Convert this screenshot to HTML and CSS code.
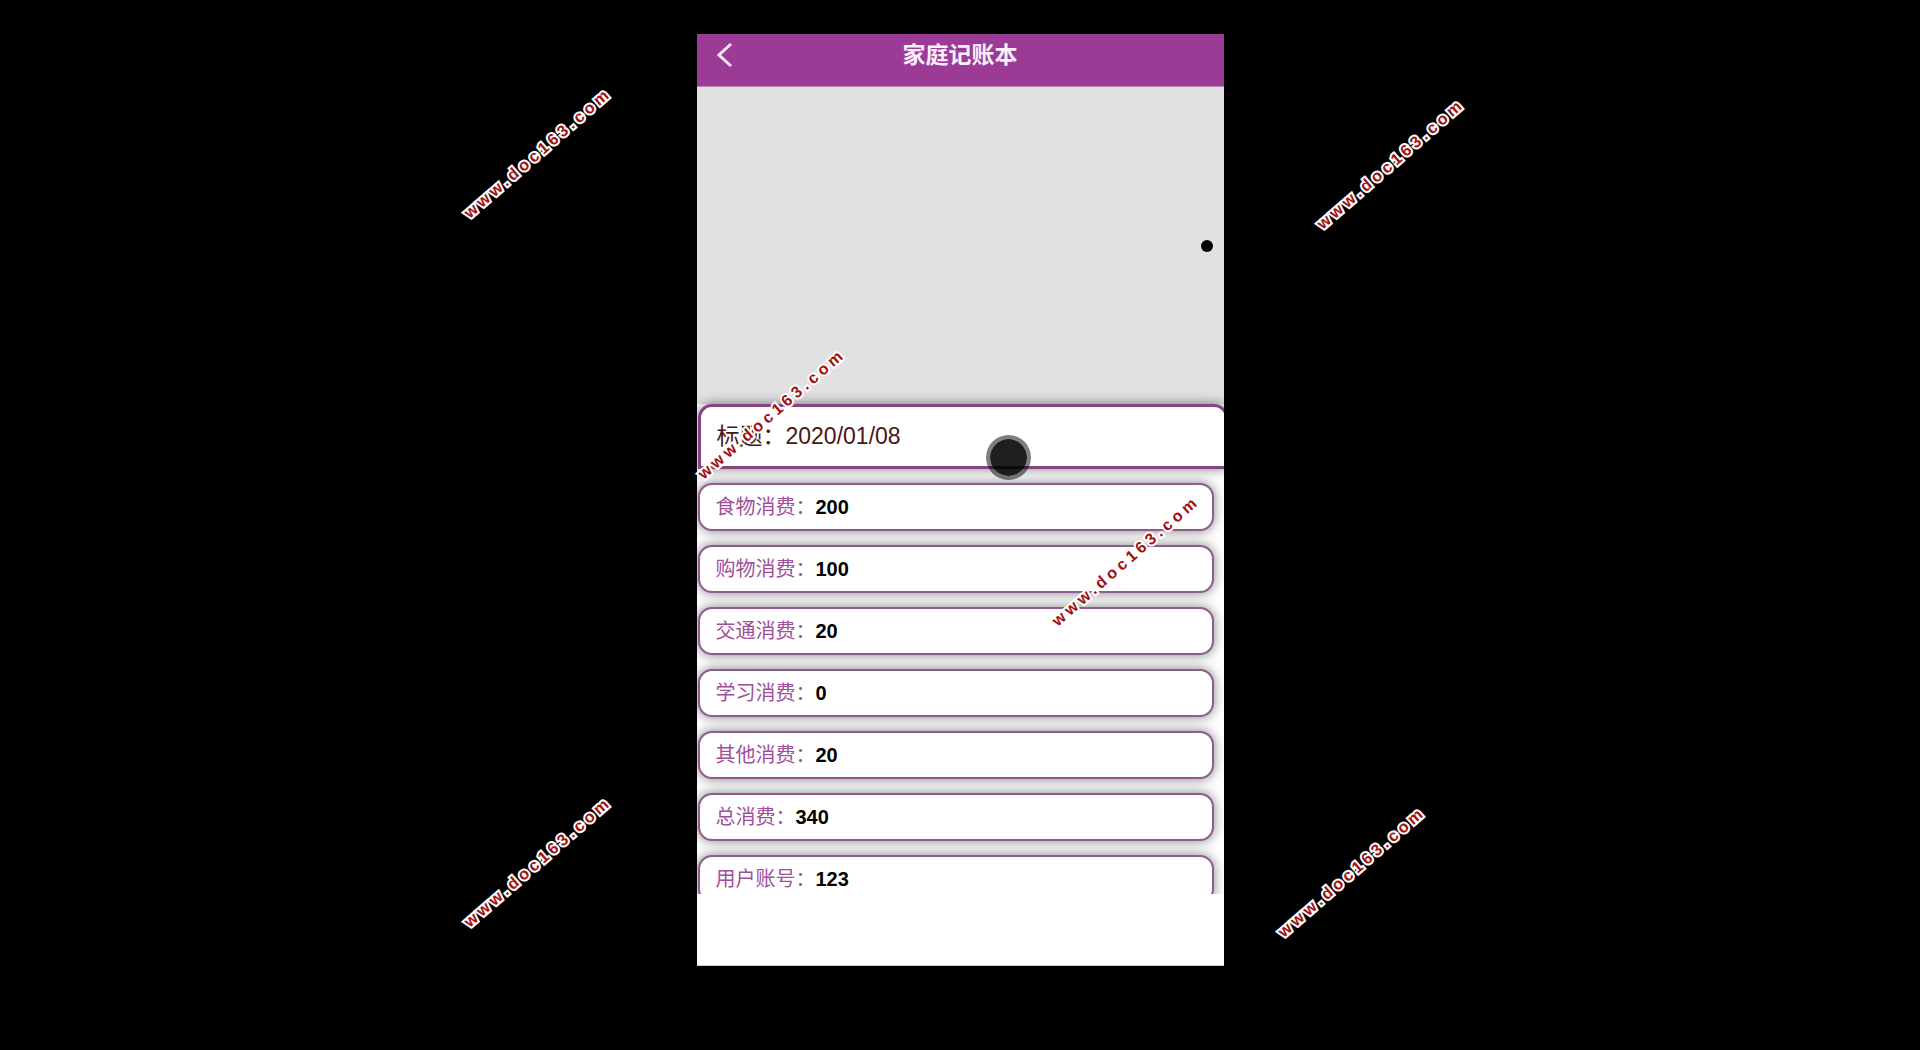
FILE: index.html
```html
<!DOCTYPE html>
<html lang="zh-CN">
<head>
<meta charset="utf-8">
<meta name="viewport" content="width=device-width, initial-scale=1">
<title>家庭记账本</title>
<link rel="stylesheet" href="styles.css">
</head>
<body>
<div class="stage">
  <main class="phone">
    <header class="bar">
      <button class="back" type="button" aria-label="返回">
        <svg width="16" height="26" viewBox="0 0 16 26" fill="none" stroke="#f6e4f8" stroke-width="3"><path d="M14 2 2 13 14 24"/></svg>
      </button>
      <h1 class="bar-title">家庭记账本</h1>
    </header>
    <section class="content">
      <div class="banner"><span class="dot"></span></div>
      <h2 class="record-title">标题：2020/01/08</h2>
      <dl class="records">
        <div class="record"><dt>食物消费：</dt><dd>200</dd></div>
        <div class="record"><dt>购物消费：</dt><dd>100</dd></div>
        <div class="record"><dt>交通消费：</dt><dd>20</dd></div>
        <div class="record"><dt>学习消费：</dt><dd>0</dd></div>
        <div class="record"><dt>其他消费：</dt><dd>20</dd></div>
        <div class="record"><dt>总消费：</dt><dd>340</dd></div>
        <div class="record"><dt>用户账号：</dt><dd>123</dd></div>
      </dl>
    </section>
    <footer class="tabs"></footer>
  </main>
  <span class="touch"></span>
  <span class="mark mark-a">www.doc163.com</span>
  <span class="mark mark-b">www.doc163.com</span>
  <span class="mark mark-c">www.doc163.com</span>
  <span class="mark mark-d">www.doc163.com</span>
  <span class="mark mark-e">www.doc163.com</span>
  <span class="mark mark-f">www.doc163.com</span>
</div>
</body>
</html>
```
FILE: styles.css
```css
* { box-sizing: border-box; }

body {
  margin: 0;
  background: #000;
  font-family: "Liberation Sans", "Noto Sans CJK SC", sans-serif;
}

.stage {
  position: relative;
  display: flex;
  justify-content: center;
  height: 100vh;
  padding: 34px 0 84px;
  overflow: hidden;
}

.phone {
  display: flex;
  flex-direction: column;
  width: 100%;
  max-width: 527px;
  background: #fff;
  overflow: hidden;
}

.bar {
  display: grid;
  grid-template-columns: 56px 1fr 56px;
  flex: none;
  height: 53px;
  padding-bottom: 11px;
  align-items: center;
  background: #9b3b96;
  border-bottom: 1px solid #b58bb3;
}

.back {
  display: flex;
  padding: 0 0 0 20px;
  border: 0;
  background: none;
}

.bar-title {
  margin: 0;
  font-size: 23px;
  line-height: 32px;
  text-align: center;
  color: #fbeffc;
}

.content {
  flex: 1;
  min-height: 0;
  padding-left: 1px;
  overflow: hidden;
}

.banner {
  display: flex;
  justify-content: flex-end;
  height: 317px;
  margin-left: -1px;
  padding: 153px 11px 0 0;
  background: #e1e1e1;
}

.dot {
  width: 12px;
  height: 12px;
  border-radius: 50%;
  background: #000;
}

.record-title {
  position: relative;
  margin: 0 -4px 14px 0;
  padding: 0 16px;
  border: 3px solid #86457f;
  border-radius: 14px 14px 0 0;
  background: #fff;
  box-shadow: 0 0 12px rgba(0, 0, 0, 0.5);
  font-size: 23px;
  font-weight: 400;
  line-height: 59px;
  color: #4a1512;
}

.records {
  display: grid;
  gap: 14px;
  margin: 0 10px 0 0;
}

.record {
  display: flex;
  padding: 0 16px;
  border: 2px solid #8f5c8d;
  border-radius: 14px;
  background: #fff;
  box-shadow: 0 0 12px rgba(0, 0, 0, 0.5);
  font-size: 20px;
  line-height: 44px;
}

dt { color: #a04f9d; }

dd {
  margin: 0;
  font-weight: 700;
  color: #000;
}

.tabs {
  flex: none;
  height: 72px;
  background: #fff;
  border-bottom: 1px solid #ccc;
}

.touch {
  position: absolute;
  top: 435px;
  left: calc(50% + 26px);
  width: 45px;
  height: 45px;
  border: 4px solid rgba(0, 0, 0, 0.5);
  border-radius: 50%;
  background: rgba(0, 0, 0, 0.88);
  background-clip: padding-box;
}

.mark {
  position: absolute;
  width: 200px;
  margin: -12px 0 0 -98px;
  font-size: 16px;
  font-weight: 700;
  line-height: 20px;
  letter-spacing: 4px;
  text-align: center;
  white-space: nowrap;
  color: #a01010;
  -webkit-text-stroke: 4px #fff;
  paint-order: stroke fill;
  transform: rotate(-41deg);
}

.mark-a { left: calc(50% - 424px); top: 155px; }
.mark-b { left: calc(50% + 429px); top: 166px; }
.mark-c { left: calc(50% - 190px); top: 416px; }
.mark-d { left: calc(50% + 164px); top: 563px; }
.mark-e { left: calc(50% - 424px); top: 864px; }
.mark-f { left: calc(50% + 390px); top: 874px; }
```
